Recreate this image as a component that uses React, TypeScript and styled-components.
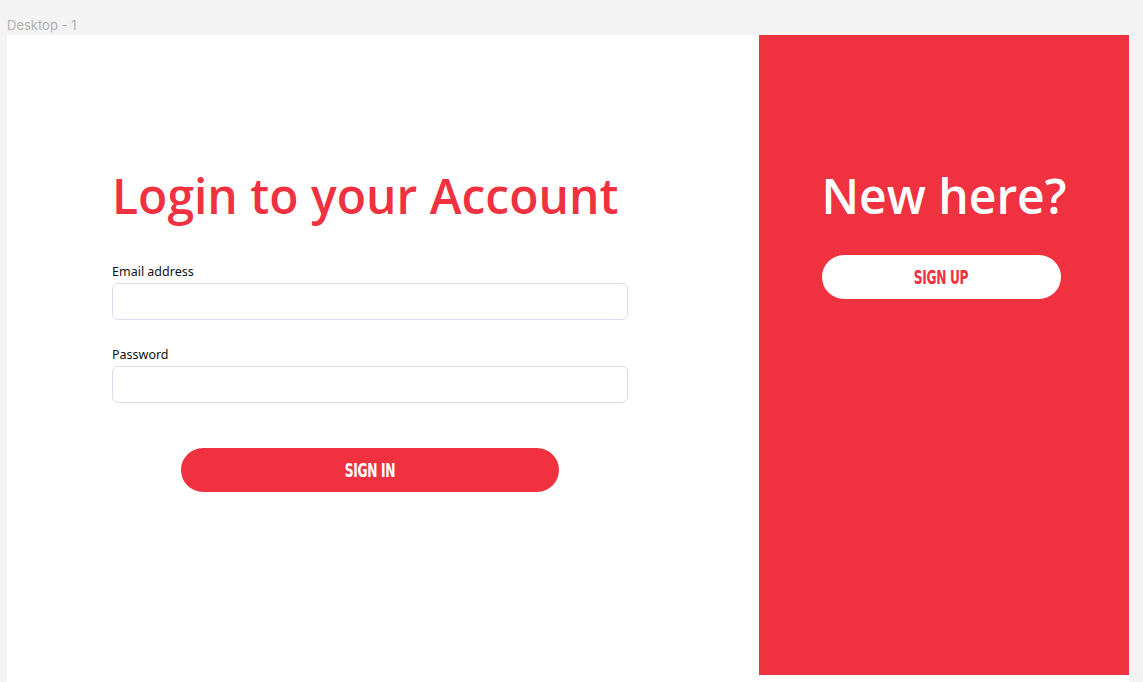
import React from "react";
import styled, { createGlobalStyle } from "styled-components";

const RED = "#f0313f";

const Global = createGlobalStyle`
  html, body { margin: 0; padding: 0; }
  body {
    background: #f4f4f4;
    font-family: "Open Sans", "Noto Sans", sans-serif;
    overflow: hidden;
  }
`;

const Canvas = styled.div`
  padding: 15px 0 0 7px;
  height: 682px;
  box-sizing: border-box;
  overflow: hidden;
`;

const FrameLabel = styled.div`
  font-family: "Inter", "Noto Sans", sans-serif;
  font-size: 13px;
  color: #b0b0b0;
  line-height: 20px;
  height: 20px;
`;

const Frame = styled.div`
  width: 1122px;
  height: 647px;
  background: #ffffff;
  display: flex;
  align-items: flex-start;
`;

const LoginColumn = styled.div`
  flex: 1;
  padding: 132px 0 0 105px;
  display: flex;
  flex-direction: column;
  align-items: flex-start;
`;

const Title = styled.h1<{ $light?: boolean }>`
  margin: 0;
  font-family: "Open Sans", "Noto Sans", sans-serif;
  font-weight: 600;
  font-size: 48px;
  line-height: 58px;
  letter-spacing: 0px;
  color: ${(p) => (p.$light ? "#ffffff" : RED)};
  white-space: nowrap;
`;

const Form = styled.form`
  margin-top: 39px;
  width: 516px;
  display: flex;
  flex-direction: column;
`;

const Field = styled.label`
  display: flex;
  flex-direction: column;
  gap: 3px;
  margin-bottom: 27px;
`;

const LabelText = styled.span`
  font-family: "Noto Sans", "Open Sans", sans-serif;
  font-size: 12.5px;
  line-height: 16px;
  color: #111;
`;

const Input = styled.input`
  box-sizing: border-box;
  width: 100%;
  height: 37px;
  border: 1px solid #dcdcef;
  border-radius: 6px;
  background: #fff;
  outline: none;
  padding: 0 10px;
`;

const PillButton = styled.button<{ $inverse?: boolean }>`
  width: ${(p) => (p.$inverse ? "239px" : "378px")};
  height: 44px;
  border: none;
  border-radius: 22px;
  background: ${(p) => (p.$inverse ? "#ffffff" : RED)};
  color: ${(p) => (p.$inverse ? RED : "#ffffff")};
  display: flex;
  align-items: center;
  justify-content: center;
  cursor: pointer;
  padding: 0;
  margin-right: ${(p) => (p.$inverse ? "5px" : "0")};
`;

const ButtonText = styled.span`
  font-family: "DejaVu Sans Condensed", "DejaVu Sans", sans-serif;
  font-weight: bold;
  font-size: 20px;
  letter-spacing: -0.5px;
  display: inline-block;
  transform: scaleX(0.68);
`;

const SignInRow = styled.div`
  display: flex;
  justify-content: center;
  margin-top: 18px;
`;

const SidePanel = styled.aside`
  width: 370px;
  height: 640px;
  background: ${RED};
  display: flex;
  flex-direction: column;
  align-items: center;
  padding-top: 132px;
  box-sizing: border-box;
  gap: 30px;
`;

export default function App() {
  return (
    <>
      <Global />
      <Canvas>
        <FrameLabel>Desktop - 1</FrameLabel>
        <Frame>
          <LoginColumn>
            <Title>Login to your Account</Title>
            <Form onSubmit={(e) => e.preventDefault()}>
              <Field>
                <LabelText>Email address</LabelText>
                <Input type="email" />
              </Field>
              <Field>
                <LabelText>Password</LabelText>
                <Input type="password" />
              </Field>
              <SignInRow>
                <PillButton type="submit">
                  <ButtonText>SIGN IN</ButtonText>
                </PillButton>
              </SignInRow>
            </Form>
          </LoginColumn>
          <SidePanel>
            <Title $light>New here?</Title>
            <PillButton type="button" $inverse>
              <ButtonText>SIGN UP</ButtonText>
            </PillButton>
          </SidePanel>
        </Frame>
      </Canvas>
    </>
  );
}
